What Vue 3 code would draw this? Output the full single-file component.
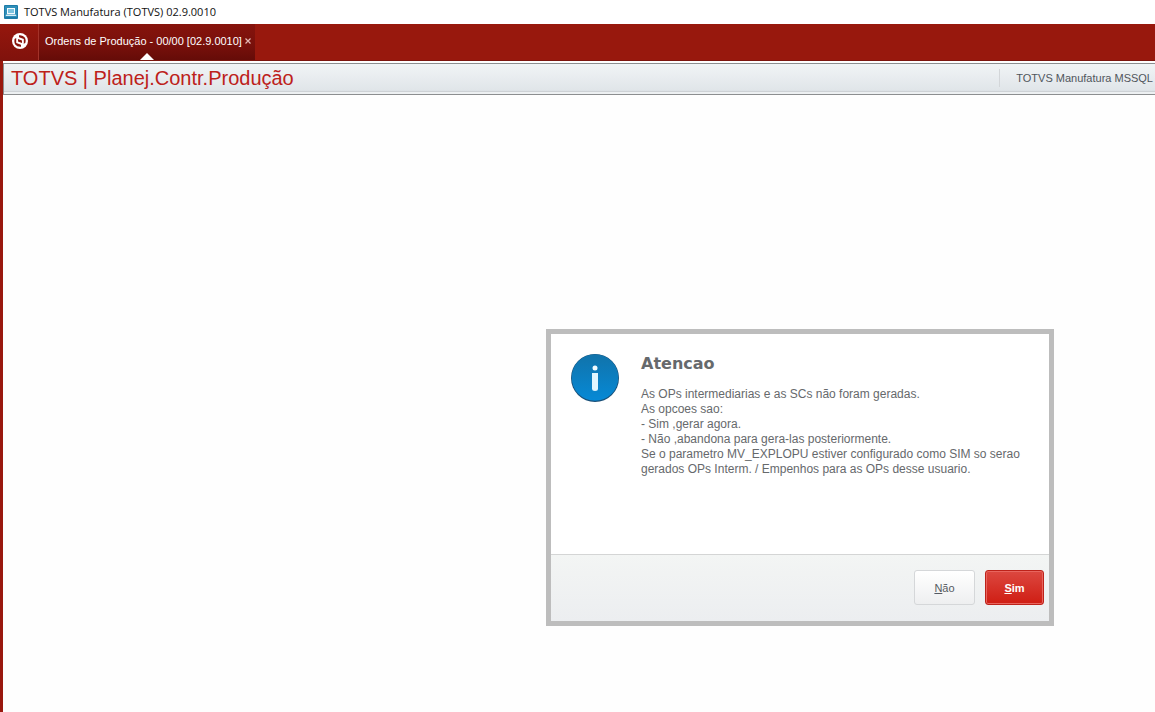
<script setup>
const message = [
  'As OPs intermediarias e as SCs não foram geradas.',
  'As opcoes sao:',
  '- Sim ,gerar agora.',
  '- Não ,abandona para gera-las posteriormente.',
  'Se o parametro MV_EXPLOPU estiver configurado como SIM so serao',
  'gerados OPs Interm. / Empenhos para as OPs desse usuario.'
]
</script>

<template>
  <div class="window">
    <header class="titlebar">
      <svg class="app-icon" viewBox="0 0 14 14" aria-hidden="true">
        <rect width="14" height="14" rx="1" fill="#1d7ba8" />
        <rect x="1" y="1" width="12" height="11" fill="#2f8fb9" />
        <rect x="3.500" y="3.500" width="7" height="5" fill="#7cc3df" stroke="#f4fbfe" />
        <path d="M2.500 9.500h9l1 1.500h-11z" fill="#d5edf6" />
      </svg>
      <span>TOTVS Manufatura (TOTVS) 02.9.0010</span>
    </header>

    <div class="shell">
      <nav class="tabs">
        <button class="home" aria-label="TOTVS">
          <svg viewBox="0 0 18 18" width="18" height="18" aria-hidden="true">
            <circle cx="9" cy="9" r="8" fill="#fff" />
            <path d="M8 3.200Q12 2.700 14 5.800Q15 8 14.500 10.500L12.800 12V7L8 5.200z" fill="#8a150d" />
            <path d="M3.500 7L5.200 6V11L10 12.800V14.800Q6 15 4 12.200Q3 10 3.500 7z" fill="#8a150d" />
            <path d="M7 7L11 8.500V11L7 9.500z" fill="#8a150d" />
          </svg>
        </button>
        <div class="tab">
          <button class="tab-label">Ordens de Produção - 00/00 [02.9.0010]</button>
          <button class="tab-close" aria-label="Fechar">
            <svg viewBox="0 0 6 6" width="6" height="6" aria-hidden="true">
              <path d="M.5.5l5 5M5.500.5l-5 5" stroke="#e3b8b4" stroke-width="1.200" />
            </svg>
          </button>
          <svg class="pointer" viewBox="0 0 14 7" aria-hidden="true"><path d="M7 0l7 7H0z" fill="#fff" /></svg>
        </div>
      </nav>

      <div class="content">
        <div class="module-bar">
          <h1>TOTVS | Planej.Contr.Produção</h1>
          <span class="environment">TOTVS Manufatura MSSQL</span>
        </div>
        <main class="workspace"></main>
      </div>
    </div>

    <section class="dialog" role="alertdialog" aria-labelledby="dialog-title" aria-describedby="dialog-text">
      <div class="dialog-body">
        <svg class="info" viewBox="0 0 48 48" aria-hidden="true">
          <defs>
            <linearGradient id="info-fill" x1="0" y1="0" x2="0" y2="1">
              <stop offset="0" stop-color="#1173aa" />
              <stop offset="1" stop-color="#0689d6" />
            </linearGradient>
          </defs>
          <circle cx="24" cy="24" r="24" fill="#184f78" />
          <circle cx="24" cy="23.500" r="23.300" fill="url(#info-fill)" />
          <circle cx="24" cy="14" r="2.500" fill="#f2fbff" />
          <path d="M21 19h6v15.500q0 2.500-3 2.500t-3-2.500z" fill="#e0f6ff" />
        </svg>
        <div>
          <h2 id="dialog-title">Atencao</h2>
          <p id="dialog-text"><span v-for="line in message" :key="line">{{ line }}</span></p>
        </div>
      </div>
      <footer>
        <button class="action"><u>N</u>ão</button>
        <button class="action primary"><u>S</u>im</button>
      </footer>
    </section>
  </div>
</template>

<style>
body {
  margin: 0;
  background: #fefefe;
}
</style>

<style scoped>
.window {
  position: relative;
  display: flex;
  flex-direction: column;
  min-height: 100vh;
  overflow: hidden;
  font-family: "Liberation Sans", Arial, sans-serif;
}

button {
  margin: 0;
  padding: 0;
  border: 0;
  background: none;
  font: inherit;
  color: inherit;
}

.titlebar {
  display: flex;
  align-items: center;
  gap: 6px;
  height: 24px;
  padding-left: 4px;
  background: #fff;
  color: #111;
  font: 11px/24px "Open Sans", "Noto Sans", sans-serif;
}

.app-icon {
  width: 14px;
  height: 14px;
}

.shell {
  flex: 1;
  display: flex;
  flex-direction: column;
  border-left: 3px solid #99180e;
}

.tabs {
  display: flex;
  height: 36px;
  margin-left: -3px;
  border-bottom: 1px solid #7c150e;
  background: #98180d;
  color: #fff;
  font-size: 11px;
}

.home {
  box-sizing: border-box;
  display: flex;
  align-items: center;
  justify-content: center;
  width: 39px;
  height: 36px;
  padding: 0 0 2px 2px;
  border-right: 1px solid #a33229;
  background: linear-gradient(#96170d, #80120c);
}

.tab {
  position: relative;
  box-sizing: border-box;
  display: flex;
  align-items: center;
  gap: 3px;
  height: 36px;
  padding: 0 4px 2px 6px;
  background: linear-gradient(#86130c, #78100b 60%, #650c08);
}

.tab-label {
  white-space: nowrap;
}

.tab-close {
  display: flex;
}

.pointer {
  position: absolute;
  left: 50%;
  bottom: 0;
  width: 14px;
  height: 7px;
  margin-left: -7px;
}

.content {
  flex: 1;
  display: flex;
  flex-direction: column;
  padding-top: 2px;
}

.module-bar {
  display: flex;
  align-items: center;
  justify-content: space-between;
  box-sizing: border-box;
  height: 32px;
  padding-bottom: 2px;
  border: 1px solid #8c8e90;
  border-right: 0;
  background: linear-gradient(#f1f4f6, #e0e5e9 88%, #c8ccd0 91%, #edf0f2 95%);
}

h1 {
  margin: 0;
  padding-left: 7px;
  color: #bd211a;
  font-size: 20px;
  font-weight: 400;
  line-height: 28px;
  white-space: nowrap;
}

.environment {
  padding: 0 2px 0 16px;
  border-left: 1px solid #d3d6d9;
  color: #50565c;
  font-size: 11px;
  line-height: 18px;
  white-space: nowrap;
}

.workspace {
  flex: 1;
}

.dialog {
  position: absolute;
  top: 329px;
  right: 101px;
  display: flex;
  flex-direction: column;
  box-sizing: border-box;
  width: 508px;
  border: 5px solid #bdbdbd;
  background: #fff;
  color: #66696c;
}

.dialog-body {
  display: flex;
  gap: 22px;
  min-height: 200px;
  padding: 20px 20px 0;
}

.info {
  flex: none;
  width: 48px;
  height: 48px;
}

h2 {
  margin: 0 0 14px;
  font: bold 16px/19px "DejaVu Sans", Verdana, sans-serif;
}

p {
  margin: 0;
  font-size: 12px;
  line-height: 15px;
}

p span {
  display: block;
  white-space: nowrap;
}

footer {
  display: flex;
  justify-content: flex-end;
  gap: 10px;
  padding: 15px 5px 16px;
  border-top: 1px solid #d4d5d5;
  background: linear-gradient(#f3f5f4, #eceef0);
}

.action {
  box-sizing: border-box;
  width: 61px;
  height: 35px;
  border: 1px solid #d5d7d9;
  border-radius: 3px;
  background: linear-gradient(#fff, #eeeff0);
  color: #555a61;
  font-size: 11px;
}

.primary {
  width: 59px;
  border-color: #bd221a;
  background: linear-gradient(#dc4840, #cf1d13);
  box-shadow: inset 0 0 0 1px #e8655e;
  color: #fff;
  font-weight: 700;
}
</style>
